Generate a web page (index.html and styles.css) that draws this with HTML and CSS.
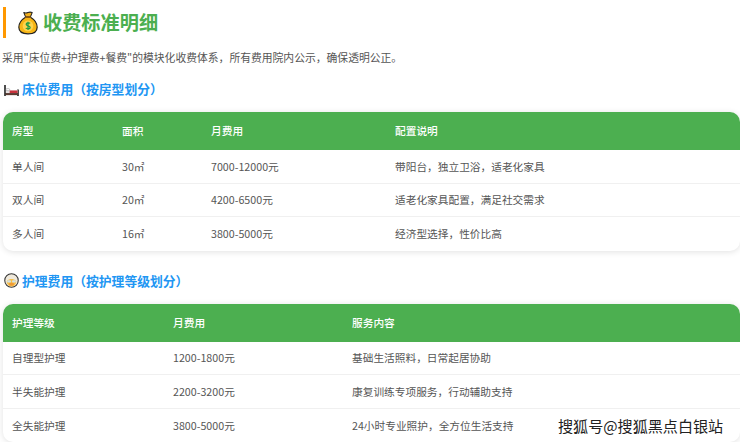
FILE: index.html
```html
<!DOCTYPE html>
<html lang="zh-CN">
<head>
<meta charset="utf-8">
<title>收费标准明细</title>
<link rel="stylesheet" href="styles.css">
</head>
<body>
<main class="page">
  <h2 class="title">
    <svg class="title-icon" viewBox="0 0 24 28" aria-hidden="true">
      <path d="M7 1.5c2 1 3 .8 5 0s3-.8 5 0l-2.2 5.5H9.2z" fill="#f2b01e" stroke="#222" stroke-width="1.3" stroke-linejoin="round"/>
      <path d="M9 7h6c5 3 8 7 8 12 0 5-4 8-11 8S1 24 1 19c0-5 3-9 8-12z" fill="#f7b516" stroke="#222" stroke-width="1.4" stroke-linejoin="round"/>
      <rect x="8.5" y="5.8" width="7" height="2.2" rx="1" fill="#8a5a12"/>
      <circle cx="12" cy="17.5" r="6.4" fill="#ffd34d"/>
      <path d="M14.6 14.5c-.8-1-4.6-1.300-4.800 1 -.2 2.500 4.900 1.400 4.800 3.900-.1 2.200-4.200 2-5.200.6M12 12.500v10" fill="none" stroke="#1f9a46" stroke-width="1.500"/>
    </svg>
    <span>收费标准明细</span>
  </h2>
  <p class="intro">采用"床位费+护理费+餐费"的模块化收费体系，所有费用院内公示，确保透明公正。</p>

  <h3 class="section">
    <svg class="section-icon" viewBox="0 0 16 14" aria-hidden="true">
      <path d="M1 1v12M15 6v7M1 10.500h14" fill="none" stroke="#2b2b2b" stroke-width="1.800"/>
      <rect x="2" y="6.500" width="12.500" height="3.500" fill="#e9e4e4"/>
      <rect x="6" y="7" width="8.500" height="2.800" fill="#c8323c"/>
      <rect x="2" y="5" width="4" height="2.200" rx="1" fill="#fff" stroke="#777" stroke-width=".5"/>
      <rect x="1.500" y="10" width="13.500" height="2" fill="#5c3a30"/>
    </svg>
    <span>床位费用（按房型划分）</span>
  </h3>
  <table class="fees fees-bed">
    <thead>
      <tr><th class="bed-a">房型</th><th class="bed-b">面积</th><th class="bed-c">月费用</th><th>配置说明</th></tr>
    </thead>
    <tbody>
      <tr><td>单人间</td><td>30㎡</td><td>7000-12000元</td><td>带阳台，独立卫浴，适老化家具</td></tr>
      <tr><td>双人间</td><td>20㎡</td><td>4200-6500元</td><td>适老化家具配置，满足社交需求</td></tr>
      <tr><td>多人间</td><td>16㎡</td><td>3800-5000元</td><td>经济型选择，性价比高</td></tr>
    </tbody>
  </table>

  <h3 class="section section-care">
    <svg class="section-icon care-icon" viewBox="0 0 16 16" aria-hidden="true">
      <circle cx="8" cy="8" r="7.200" fill="#efe9dc" stroke="#333" stroke-width="1.100"/>
      <path d="M3 8.500c1.500-1.500 3.500-2 5-2s3.500.5 5 2c.4 3-2 5.800-5 5.800S2.600 11.500 3 8.500z" fill="#f8c04a"/>
      <rect x="3.400" y="7.800" width="4" height="2.400" rx="1" fill="#cfe0e6"/>
      <rect x="8.600" y="7.800" width="4" height="2.400" rx="1" fill="#cfe0e6"/>
      <ellipse cx="8" cy="12" rx="2.800" ry="1.500" fill="#f09a35"/>
    </svg>
    <span>护理费用（按护理等级划分）</span>
  </h3>
  <table class="fees fees-care">
    <thead>
      <tr><th class="care-a">护理等级</th><th class="care-b">月费用</th><th>服务内容</th></tr>
    </thead>
    <tbody>
      <tr><td>自理型护理</td><td>1200-1800元</td><td>基础生活照料，日常起居协助</td></tr>
      <tr><td>半失能护理</td><td>2200-3200元</td><td>康复训练专项服务，行动辅助支持</td></tr>
      <tr><td>全失能护理</td><td>3800-5000元</td><td>24小时专业照护，全方位生活支持</td></tr>
    </tbody>
  </table>
</main>
<div class="watermark">搜狐号@搜狐黑点白银站</div>
</body>
</html>
```
FILE: styles.css
```css
html, body {
  margin: 0;
  height: 442px;
  overflow: hidden;
  background: #fff;
}
body {
  position: relative;
  font-family: "Noto Sans CJK SC", "Noto Sans", sans-serif;
  color: #555;
}
.page {
  padding: 7px 0 0 3px;
}
.title {
  display: flex;
  align-items: center;
  height: 31px;
  margin: 0;
  padding-left: 12px;
  border-left: 3px solid #ff9800;
  color: #4caf50;
  font-size: 19.200px;
  font-weight: 700;
  line-height: 31px;
}
.title-icon {
  width: 20px;
  height: 24px;
  margin-right: 5px;
}
.intro {
  margin: 10px 0 0 -1px;
  font-size: 10.800px;
  line-height: 18px;
  color: #555;
}
.section {
  display: flex;
  align-items: center;
  margin: 13px 0 0;
  height: 20px;
  color: #2196f3;
  font-size: 12.800px;
  font-weight: 700;
  line-height: 20px;
}
.section-icon {
  width: 15px;
  height: 13px;
  margin: 2px 3px 0 1px;
  flex: none;
}
.care-icon {
  height: 15px;
  margin-top: 0;
}
.section-care {
  margin-top: 20px;
}
.fees {
  width: 737px;
  margin-top: 13px;
  border-collapse: separate;
  border-spacing: 0;
  border-radius: 10px;
  overflow: hidden;
  box-shadow: 0 1px 6px rgba(0, 0, 0, .12);
  font-size: 10.700px;
  table-layout: fixed;
}
.fees th {
  height: 38px;
  padding: 0 0 0 9px;
  background: #4caf50;
  color: #fff;
  font-weight: 500;
  text-align: left;
  box-sizing: border-box;
}
.fees-bed th {
  padding-bottom: 1px;
}
.fees td {
  height: 33.500px;
  padding: 0 0 0 9px;
  border-bottom: 1px solid #f0f0f0;
  color: #555;
  box-sizing: border-box;
}
.fees tr:last-child td {
  border-bottom: 0;
}
.bed-a { width: 110px; }
.bed-b { width: 89px; }
.bed-c { width: 184px; }
.care-a { width: 161px; }
.care-b { width: 179px; }
.watermark {
  position: absolute;
  left: 558px;
  top: 415px;
  color: #222;
  font-size: 15.100px;
  line-height: 20px;
  white-space: nowrap;
  text-shadow: 0 0 2px #fff, 0 0 2px #fff, 1px 1px 1px #fff;
}
```
